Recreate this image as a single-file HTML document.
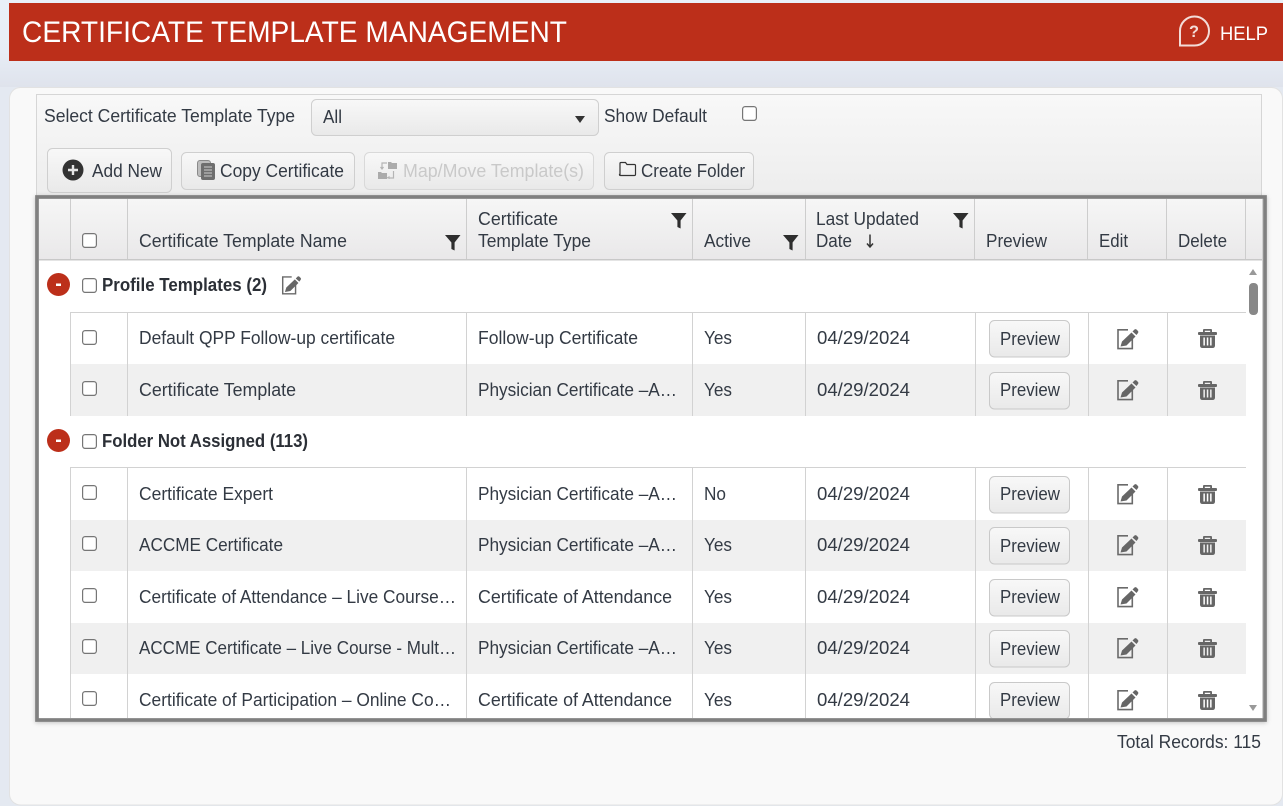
<!DOCTYPE html>
<html lang="en"><head><meta charset="utf-8"><title>Certificate Template Management</title>
<style>
html,body{margin:0;padding:0;width:1283px;height:806px;overflow:hidden;background:#e4e9f1}
svg{display:block}
text{font-family:"Liberation Sans",Arial,sans-serif;font-size:18px;fill:#333a44}
.b{font-weight:700;fill:#2b2f36}
.d{fill:#c9c9c9}
.w{fill:#fff}
</style></head><body>
<svg width="1283" height="806" viewBox="0 0 1283 806" xmlns="http://www.w3.org/2000/svg">
<defs>
<linearGradient id="bg" x1="0" y1="0" x2="0" y2="1"><stop offset="0" stop-color="#e9f0f8"/><stop offset=".6" stop-color="#e7edf6"/><stop offset="1" stop-color="#dfe3ec"/></linearGradient>
<linearGradient id="panel" x1="0" y1="0" x2="0" y2="1"><stop offset="0" stop-color="#f8f8f8"/><stop offset="1" stop-color="#ececec"/></linearGradient>
<linearGradient id="btn" x1="0" y1="0" x2="0" y2="1"><stop offset="0" stop-color="#f8f8f8"/><stop offset="1" stop-color="#e9e9e9"/></linearGradient>
<linearGradient id="hd" x1="0" y1="0" x2="0" y2="1"><stop offset="0" stop-color="#f6f6f6"/><stop offset="1" stop-color="#e9e8e9"/></linearGradient>
<filter id="sh" x="-2%" y="-2%" width="104%" height="104%"><feDropShadow dx="0" dy="1" stdDeviation="2" flood-color="#000" flood-opacity=".22"/></filter>
<clipPath id="gc"><rect x="38" y="199" width="1225" height="519"/></clipPath>
<g id="cb"><rect x=".6" y=".6" width="13.8" height="13.8" rx="2.6" fill="#fff" stroke="#767676" stroke-width="1.2"/></g>
<path id="fn" d="M0 0h15.500L9.600 7.500V15.500L6.400 14V7.500z" fill="#2e2e2e"/>
<g id="ed"><path d="M11 .8H1V19.600H15.300V9" fill="none" stroke="#6a6a6a" stroke-width="1.600"/><path d="M3.500 17.500l1.500-5L14.500 3.500l4 4-9 9z" fill="#666"/><path d="M15.500 2.500L17.500 0.500q1-.8 2 0l1.500 1.500q.8 1 0 2l-1.500 2z" fill="#666"/></g>
<g id="tr" fill="#666"><path d="M5 3.500V1q0-1 1-1h7q1 0 1 1v2.500h-1.800V1.800H6.800v1.700z"/><rect x="0" y="3" width="19" height="3" rx="1"/><path d="M2 6.500h15V16.500q0 2.500-2.500 2.500h-10Q2 19 2 16.500zM5.400 8.500v8h1.500v-8zM8.800 8.500v8h1.500v-8zM12.100 8.500v8h1.500v-8z" fill-rule="evenodd"/></g>
<g id="pb"><rect x=".5" y=".5" width="80" height="36.500" rx="5" fill="url(#btn)" stroke="#c9c9c9"/></g>
</defs>

<rect width="1283" height="806" fill="#e4e9f1"/>
<rect width="1283" height="87" fill="url(#bg)"/>
<rect x="9" y="3" width="1274" height="58" fill="#bc2f1a"/>
<text class="w" x="22" y="42" style="font-size:30px" textLength="545" lengthAdjust="spacingAndGlyphs">CERTIFICATE TEMPLATE MANAGEMENT</text>
<path d="M1180 45.500V31a14.500 14.500 0 1 1 14.500 14.500z" fill="none" stroke="#f3dcd8" stroke-width="2"/>
<text x="1189" y="37" style="font-size:17px;font-weight:700;fill:#f3dcd8" textLength="10" lengthAdjust="spacingAndGlyphs">?</text>
<text class="w" x="1220" y="40" style="font-size:19px" textLength="48" lengthAdjust="spacingAndGlyphs">HELP</text>

<rect x="9.500" y="87.500" width="1273" height="717.500" rx="11" fill="#f9f9f9" stroke="#e2e2e2"/>
<rect x="36.500" y="94.500" width="1225" height="110" fill="url(#panel)" stroke="#d6d6d6"/>
<text x="44" y="122" textLength="251" lengthAdjust="spacingAndGlyphs">Select Certificate Template Type</text>
<rect x="311.500" y="99.500" width="287" height="36" rx="5" fill="url(#btn)" stroke="#cfcfcf"/>
<text x="323" y="123" textLength="19" lengthAdjust="spacingAndGlyphs">All</text>
<path d="M575 116h10l-5 7z" fill="#333"/>
<text x="604" y="122" textLength="103" lengthAdjust="spacingAndGlyphs">Show Default</text>
<use href="#cb" x="742" y="106"/>

<rect x="47.500" y="148.500" width="124" height="44" rx="5" fill="url(#btn)" stroke="#cfcfcf"/>
<circle cx="73" cy="170" r="10.500" fill="#333"/>
<path d="M73 165v10M68 170h10" stroke="#e6e6e6" stroke-width="2.400"/>
<text x="92" y="177" textLength="70" lengthAdjust="spacingAndGlyphs">Add New</text>
<rect x="181.500" y="152.500" width="173" height="37" rx="5" fill="url(#btn)" stroke="#cfcfcf"/>
<rect x="197.500" y="160.500" width="13" height="16" rx="2.500" fill="#bdbdbd" stroke="#8a8a8a"/>
<rect x="201" y="163" width="14" height="17" rx="2" fill="#6e6e6e"/>
<path d="M204 167h8M204 170h8M204 173h8M204 176h8" stroke="#ccc" stroke-width="1"/>
<text x="220" y="177" textLength="124" lengthAdjust="spacingAndGlyphs">Copy Certificate</text>
<rect x="364.500" y="152.500" width="229" height="37" rx="5" fill="url(#btn)" stroke="#d9d9d9"/>
<path d="M388 162h3l1 1h5v6h-9zM378 172h3l1 1h5v6h-9z" fill="#ababab"/>
<path d="M382 169v-6h5M393.500 171v7h-5M380.500 167l1.500 2 1.500-2M387 178l2-1v2" fill="none" stroke="#b5b5b5" stroke-width="1.200"/>
<text class="d" x="403" y="177" textLength="181" lengthAdjust="spacingAndGlyphs">Map/Move Template(s)</text>
<rect x="604.500" y="152.500" width="149" height="37" rx="5" fill="url(#btn)" stroke="#cfcfcf"/>
<path d="M620 174.500v-11q0-1 1-1h4.500l1.500 2h7.500q1 0 1 1v9q0 1-1 1h-14q-1 0-1-1z" fill="none" stroke="#333" stroke-width="1.200"/>
<text x="641" y="177" textLength="104" lengthAdjust="spacingAndGlyphs">Create Folder</text>

<rect x="37" y="197" width="1228" height="523" fill="#fff" stroke="#808080" stroke-width="3.700" filter="url(#sh)"/>
<g clip-path="url(#gc)">
<rect x="39" y="199" width="1224" height="519" fill="#fff"/>
<rect x="39" y="199" width="1223" height="61" fill="url(#hd)"/>
<rect x="39" y="259" width="1223" height="1.500" fill="#c8c8c8"/>
<path d="M70.500 199v60M127.500 199v60M466.500 199v60M692.500 199v60M805.500 199v60M974.500 199v60M1087.500 199v60M1166.500 199v60M1245.500 199v60" stroke="#cdcdcd"/>
<rect x="70" y="364" width="1176" height="52" fill="#f0f0f0"/>
<rect x="70" y="520" width="1176" height="51" fill="#f0f0f0"/>
<rect x="70" y="623" width="1176" height="51" fill="#f0f0f0"/>
<path d="M70 312.500h1176M70 467.500h1176" stroke="#d2d2d2"/>
<path d="M70.500 312v104M127.500 312v104M466.500 312v104M692.500 312v104M805.500 312v104M975.500 312v104M1088.500 312v104M1167.500 312v104M70.500 468v250M127.500 468v250M466.500 468v250M692.500 468v250M805.500 468v250M975.500 468v250M1088.500 468v250M1167.500 468v250" stroke="#d2d2d2"/>

<use href="#cb" x="82" y="233"/>
<text x="139" y="247" textLength="208" lengthAdjust="spacingAndGlyphs">Certificate Template Name</text>
<text x="478" y="225" textLength="80" lengthAdjust="spacingAndGlyphs">Certificate</text>
<text x="478" y="247" textLength="113" lengthAdjust="spacingAndGlyphs">Template Type</text>
<text x="704" y="247" textLength="47" lengthAdjust="spacingAndGlyphs">Active</text>
<text x="816" y="225" textLength="103" lengthAdjust="spacingAndGlyphs">Last Updated</text>
<text x="816" y="247" textLength="36" lengthAdjust="spacingAndGlyphs">Date</text>
<path d="M870 234.500v12M867 243.500l3 3.500 3-3.500" fill="none" stroke="#333" stroke-width="1.500"/>
<text x="986" y="247" textLength="61" lengthAdjust="spacingAndGlyphs">Preview</text>
<text x="1099" y="247" textLength="29" lengthAdjust="spacingAndGlyphs">Edit</text>
<text x="1178" y="247" textLength="49" lengthAdjust="spacingAndGlyphs">Delete</text>
<use href="#fn" x="445" y="235"/><use href="#fn" x="671" y="213"/><use href="#fn" x="783" y="235"/><use href="#fn" x="953" y="213"/>

<circle cx="58.500" cy="284.500" r="11.500" fill="#bc2f1a"/><rect x="56" y="283.500" width="5" height="2.500" fill="#fff"/>
<use href="#cb" x="82" y="278"/>
<text class="b" x="102" y="291" textLength="165" lengthAdjust="spacingAndGlyphs">Profile Templates (2)</text>
<use href="#ed" x="282" y="278" transform="translate(28 26) scale(.9)"/>
<circle cx="58.500" cy="440.500" r="11.500" fill="#bc2f1a"/><rect x="56" y="439.500" width="5" height="2.500" fill="#fff"/>
<use href="#cb" x="82" y="434"/>
<text class="b" x="102" y="447" textLength="206" lengthAdjust="spacingAndGlyphs">Folder Not Assigned (113)</text>

<use href="#cb" x="82" y="330"/>
<text x="139" y="344" textLength="256" lengthAdjust="spacingAndGlyphs">Default QPP Follow-up certificate</text>
<text x="478" y="344" textLength="160" lengthAdjust="spacingAndGlyphs">Follow-up Certificate</text>
<text x="704" y="344" textLength="28" lengthAdjust="spacingAndGlyphs">Yes</text>
<text x="817" y="344" textLength="93" lengthAdjust="spacingAndGlyphs">04/29/2024</text>
<use href="#pb" x="989" y="320"/><text x="1000" y="345" textLength="60" lengthAdjust="spacingAndGlyphs">Preview</text>
<use href="#ed" x="1117" y="329"/><use href="#tr" x="1198" y="329"/>

<use href="#cb" x="82" y="381"/>
<text x="139" y="396" textLength="157" lengthAdjust="spacingAndGlyphs">Certificate Template</text>
<text x="478" y="396" textLength="199" lengthAdjust="spacingAndGlyphs">Physician Certificate –A…</text>
<text x="704" y="396" textLength="28" lengthAdjust="spacingAndGlyphs">Yes</text>
<text x="817" y="396" textLength="93" lengthAdjust="spacingAndGlyphs">04/29/2024</text>
<use href="#pb" x="989" y="372"/><text x="1000" y="396" textLength="60" lengthAdjust="spacingAndGlyphs">Preview</text>
<use href="#ed" x="1117" y="380"/><use href="#tr" x="1198" y="381"/>

<use href="#cb" x="82" y="485"/>
<text x="139" y="500" textLength="134" lengthAdjust="spacingAndGlyphs">Certificate Expert</text>
<text x="478" y="500" textLength="199" lengthAdjust="spacingAndGlyphs">Physician Certificate –A…</text>
<text x="704" y="500" textLength="22" lengthAdjust="spacingAndGlyphs">No</text>
<text x="817" y="500" textLength="93" lengthAdjust="spacingAndGlyphs">04/29/2024</text>
<use href="#pb" x="989" y="476"/><text x="1000" y="500" textLength="60" lengthAdjust="spacingAndGlyphs">Preview</text>
<use href="#ed" x="1117" y="484"/><use href="#tr" x="1198" y="485"/>

<use href="#cb" x="82" y="536"/>
<text x="139" y="551" textLength="144" lengthAdjust="spacingAndGlyphs">ACCME Certificate</text>
<text x="478" y="551" textLength="199" lengthAdjust="spacingAndGlyphs">Physician Certificate –A…</text>
<text x="704" y="551" textLength="28" lengthAdjust="spacingAndGlyphs">Yes</text>
<text x="817" y="551" textLength="93" lengthAdjust="spacingAndGlyphs">04/29/2024</text>
<use href="#pb" x="989" y="527"/><text x="1000" y="552" textLength="60" lengthAdjust="spacingAndGlyphs">Preview</text>
<use href="#ed" x="1117" y="535"/><use href="#tr" x="1198" y="536"/>

<use href="#cb" x="82" y="588"/>
<text x="139" y="603" textLength="317" lengthAdjust="spacingAndGlyphs">Certificate of Attendance – Live Course…</text>
<text x="478" y="603" textLength="194" lengthAdjust="spacingAndGlyphs">Certificate of Attendance</text>
<text x="704" y="603" textLength="28" lengthAdjust="spacingAndGlyphs">Yes</text>
<text x="817" y="603" textLength="93" lengthAdjust="spacingAndGlyphs">04/29/2024</text>
<use href="#pb" x="989" y="579"/><text x="1000" y="603" textLength="60" lengthAdjust="spacingAndGlyphs">Preview</text>
<use href="#ed" x="1117" y="587"/><use href="#tr" x="1198" y="588"/>

<use href="#cb" x="82" y="639"/>
<text x="139" y="654" textLength="317" lengthAdjust="spacingAndGlyphs">ACCME Certificate – Live Course - Mult…</text>
<text x="478" y="654" textLength="199" lengthAdjust="spacingAndGlyphs">Physician Certificate –A…</text>
<text x="704" y="654" textLength="28" lengthAdjust="spacingAndGlyphs">Yes</text>
<text x="817" y="654" textLength="93" lengthAdjust="spacingAndGlyphs">04/29/2024</text>
<use href="#pb" x="989" y="630"/><text x="1000" y="655" textLength="60" lengthAdjust="spacingAndGlyphs">Preview</text>
<use href="#ed" x="1117" y="638"/><use href="#tr" x="1198" y="639"/>

<use href="#cb" x="82" y="691"/>
<text x="139" y="706" textLength="312" lengthAdjust="spacingAndGlyphs">Certificate of Participation – Online Co…</text>
<text x="478" y="706" textLength="194" lengthAdjust="spacingAndGlyphs">Certificate of Attendance</text>
<text x="704" y="706" textLength="28" lengthAdjust="spacingAndGlyphs">Yes</text>
<text x="817" y="706" textLength="93" lengthAdjust="spacingAndGlyphs">04/29/2024</text>
<use href="#pb" x="989" y="682"/><text x="1000" y="706" textLength="60" lengthAdjust="spacingAndGlyphs">Preview</text>
<use href="#ed" x="1117" y="690"/><use href="#tr" x="1198" y="691"/>

<path d="M1249 275l4-6 4 6zM1249 705l4 6 4-6z" fill="#999"/>
<rect x="1249" y="283" width="9" height="32" rx="4" fill="#888"/>
<rect x="1262" y="199" width="1.500" height="519" fill="#d0d0d0"/>
</g>
<text x="1117" y="748" textLength="144" lengthAdjust="spacingAndGlyphs">Total Records: 115</text>
</svg>
</body></html>
